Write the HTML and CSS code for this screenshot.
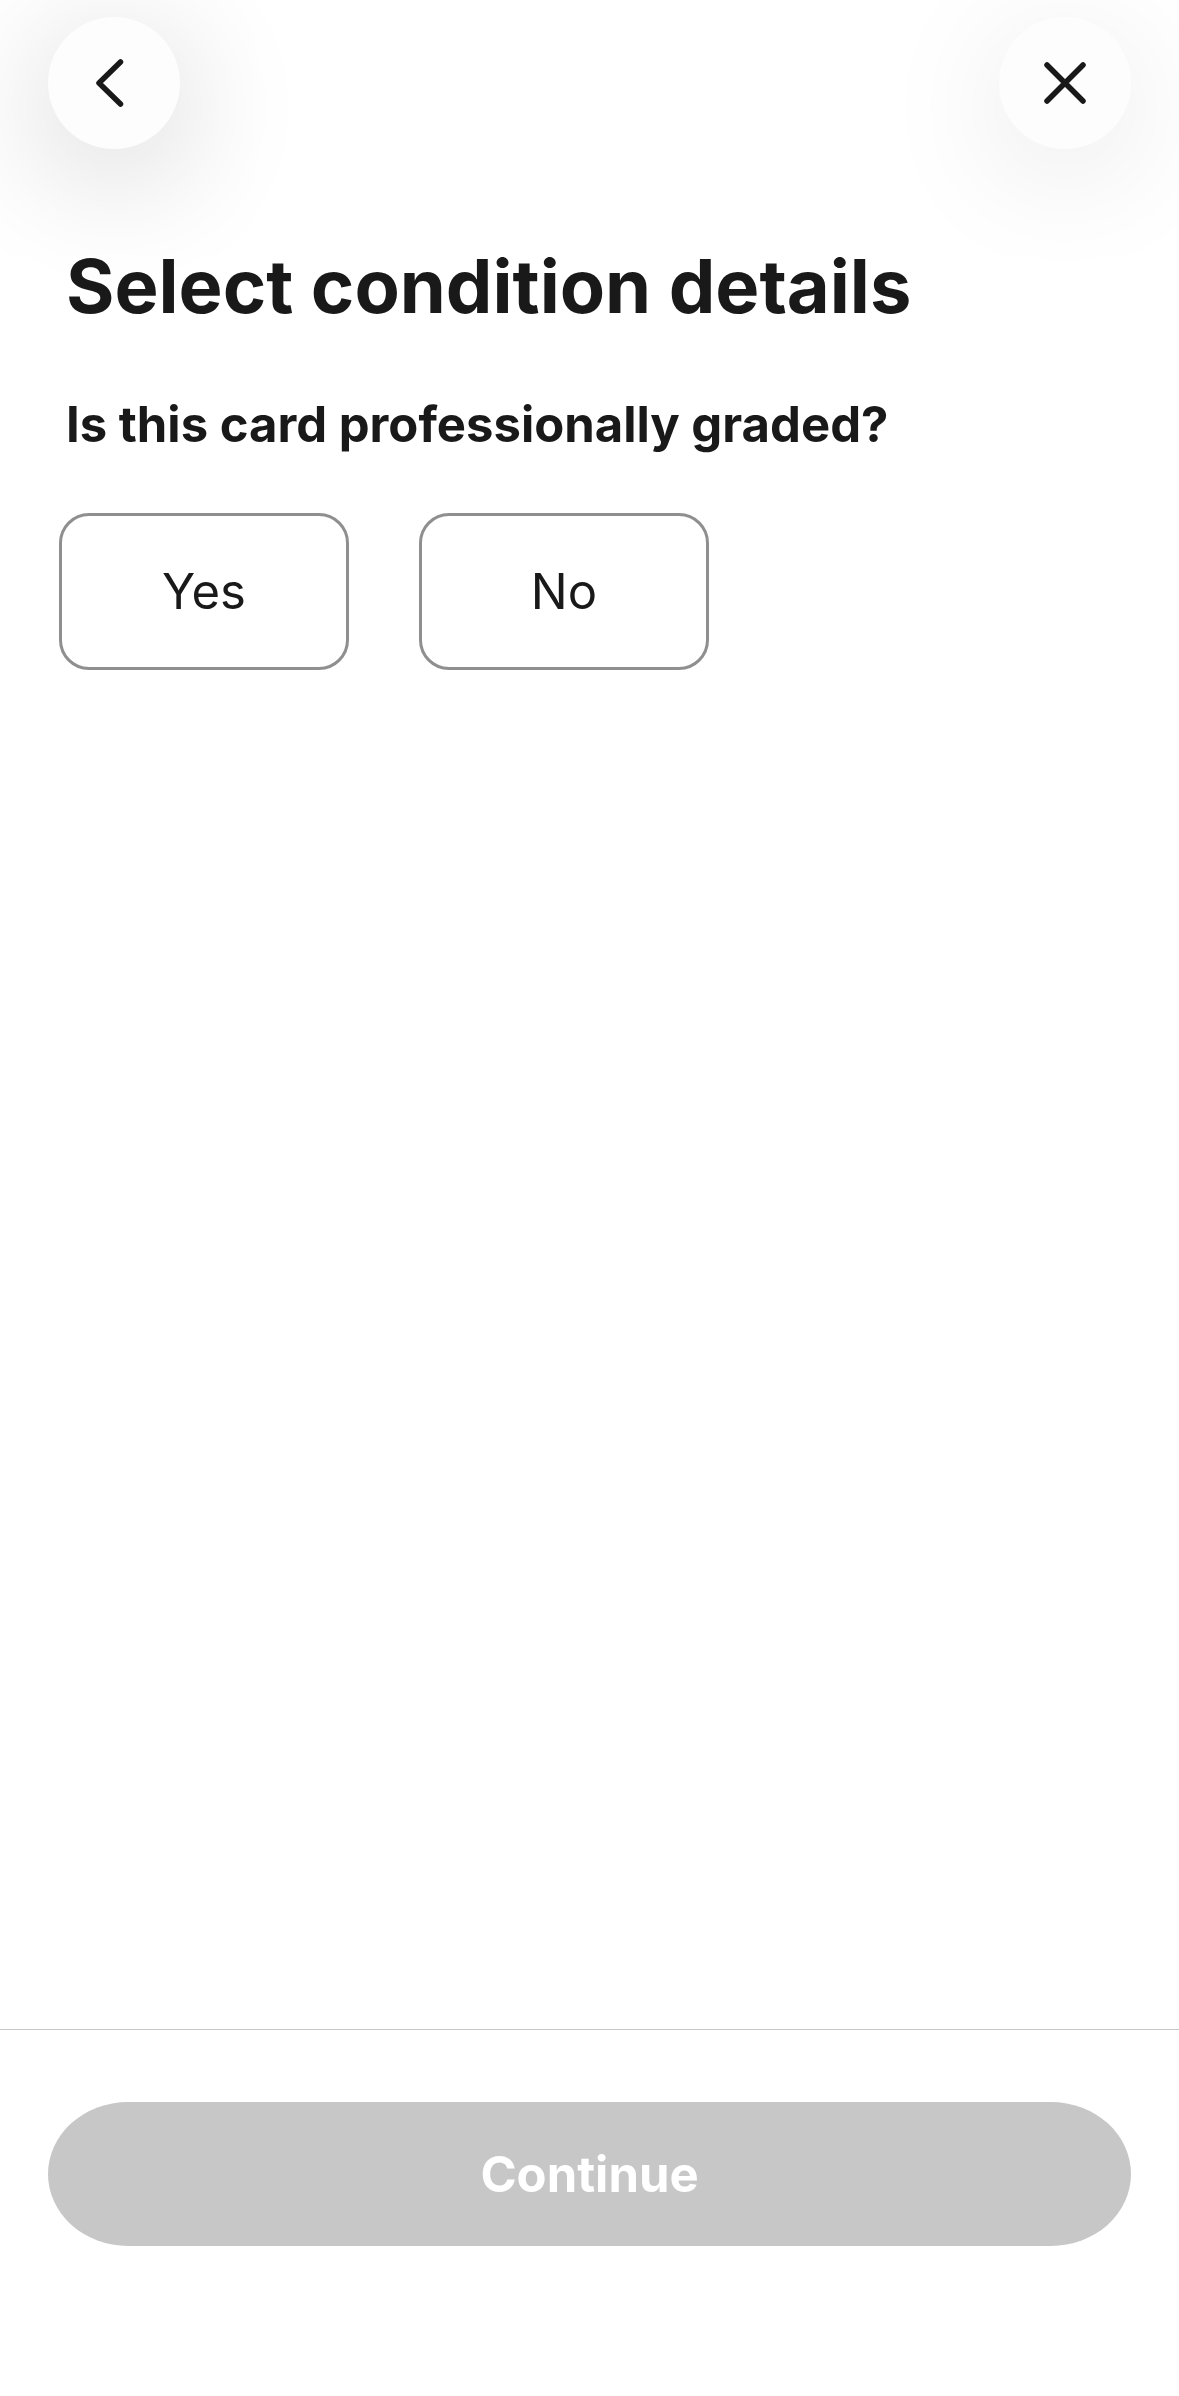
FILE: index.html
```html
<!DOCTYPE html>
<html lang="en">
<head>
<meta charset="utf-8">
<meta name="viewport" content="width=device-width, initial-scale=1">
<title>Select condition details</title>
<link rel="stylesheet" href="styles.css">
</head>
<body>
<header class="topbar">
  <button class="round round-back" type="button" aria-label="Back">
    <svg class="icon" viewBox="0 0 120 120" aria-hidden="true"><path d="M73 18 L30 60 L73 102"/></svg>
  </button>
  <button class="round round-close" type="button" aria-label="Close">
    <svg class="icon" viewBox="0 0 120 120" aria-hidden="true"><path d="M24 24 L96 96 M96 24 L24 96"/></svg>
  </button>
</header>
<main class="content">
  <h1 class="title">Select condition details</h1>
  <h2 class="question">Is this card professionally graded?</h2>
  <div class="choices">
    <button class="choice" type="button">Yes</button>
    <button class="choice" type="button">No</button>
  </div>
</main>
<footer class="footer">
  <button class="continue" type="button" disabled>Continue</button>
</footer>
</body>
</html>
```
FILE: styles.css
```css
* { box-sizing: border-box; }
body {
  margin: 0;
  min-height: 100vh;
  display: flex;
  flex-direction: column;
  background: #fff;
  color: #191919;
  font-family: Inter, "Liberation Sans", sans-serif;
}
button { font-family: inherit; border: 0; padding: 0; color: inherit; }
.topbar {
  display: flex;
  justify-content: space-between;
  padding: 17px 48px 0;
}
.round {
  display: grid;
  place-items: center;
  width: 132px;
  height: 132px;
  border-radius: 50%;
  background: #fdfdfd;
}
.round-back { box-shadow: 0 24px 130px rgba(0, 0, 0, .19); }
.round-close { box-shadow: 0 24px 130px rgba(0, 0, 0, .1); }
.icon {
  width: 60px;
  height: 60px;
  fill: none;
  stroke: #191919;
  stroke-width: 11;
  stroke-linecap: round;
  stroke-linejoin: round;
}
.content { flex: 1; padding: 92px 59px 0; }
.title { margin: 0; padding: 0 7px; font-size: 74px; line-height: 90px; font-weight: 700; }
.question { margin: 64px 0 0; padding: 0 7px; font-size: 49px; line-height: 60px; font-weight: 700; }
.choices { display: flex; gap: 70px; margin-top: 58px; }
.choice {
  width: 290px;
  height: 157px;
  border: 3px solid #8f8f8f;
  border-radius: 30px;
  background: #fff;
  font-size: 49px;
}
.footer { padding: 72px 48px 150px; border-top: 1px solid #c7c7c7; }
.continue {
  display: block;
  width: 100%;
  height: 144px;
  border-radius: 80px / 72px;
  background: #c7c7c7;
  color: #fff;
  font-size: 49px;
  font-weight: 700;
}
```
